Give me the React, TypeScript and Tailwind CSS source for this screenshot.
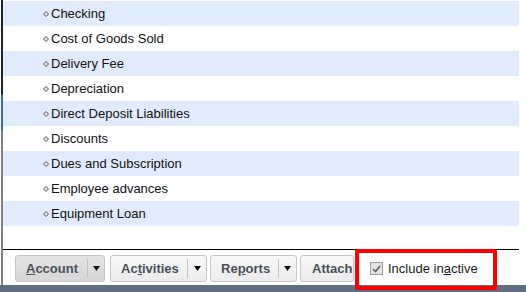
import type { ReactNode } from "react";

const accounts = [
  "Checking",
  "Cost of Goods Sold",
  "Delivery Fee",
  "Depreciation",
  "Direct Deposit Liabilities",
  "Discounts",
  "Dues and Subscription",
  "Employee advances",
  "Equipment Loan",
];

function Diamond() {
  return (
    <svg width="6" height="6" viewBox="0 0 6 6" className="shrink-0" aria-hidden="true">
      <polygon points="3,0.5 5.5,3 3,5.5 0.5,3" fill="#e8e8e8" stroke="#555" strokeWidth="1" />
    </svg>
  );
}

function Arrow() {
  return (
    <svg width="7" height="5" viewBox="0 0 7 5" aria-hidden="true">
      <polygon points="0,0 7,0 3.5,5" fill="#111" />
    </svg>
  );
}

function SplitButton({
  label,
  mainW,
  arrowW,
  pressed,
}: {
  label: ReactNode;
  mainW: string;
  arrowW: string;
  pressed?: boolean;
}) {
  return (
    <div
      className={`flex h-[27px] rounded-[3px] border border-[#c6c6c6] ${
        pressed
          ? "bg-[linear-gradient(to_bottom,#e4e4e4,#d6d6d6)]"
          : "bg-[linear-gradient(to_bottom,#f8f8f8,#ebebeb)]"
      }`}
    >
      <div className={`flex items-center pl-[10px] ${mainW} text-[13px] font-bold text-[#4a5059]`}>
        {label}
      </div>
      <div className="my-[3px] w-px bg-[#c2c2c2]" />
      <div className={`flex items-center justify-center ${arrowW}`}>
        <Arrow />
      </div>
    </div>
  );
}

export default function App() {
  return (
    <div className="relative h-[292px] w-[526px] overflow-hidden bg-white font-['Liberation_Sans',Arial,sans-serif]">
      <div className="flex h-full flex-col">
        <div className="flex flex-1">
          <div className="ml-[1px] w-[2px] bg-[linear-gradient(to_bottom,#1d2230_0%,#1d2230_33%,#3c6aae_33.4%,#3c6aae_45.5%,#808080_45.7%,#808080_100%)]" />
          <div className="flex w-[516px] flex-col">
            <ul className="pt-[1px]">
              {accounts.map((name, i) => (
                <li
                  key={name}
                  className={`flex h-[25px] items-center gap-[2px] pl-[40px] text-[13px] text-[#111] ${
                    i % 2 === 0 ? "bg-[#e0ecfd]" : "bg-white"
                  }`}
                >
                  <Diamond />
                  <span>{name}</span>
                </li>
              ))}
            </ul>
            <div className="flex-1" />
            <div className="h-px bg-black" />
            <div className="flex h-[35px] items-start pl-[12px] pt-[5px]">
              <SplitButton
                pressed
                mainW="w-[71px]"
                arrowW="w-[16px]"
                label={
                  <span>
                    <span className="underline">A</span>ccount
                  </span>
                }
              />
              <div className="ml-[5px]">
                <SplitButton
                  mainW="w-[76px]"
                  arrowW="w-[18px]"
                  label={
                    <span>
                      Ac<span className="underline">t</span>ivities
                    </span>
                  }
                />
              </div>
              <div className="ml-[3px]">
                <SplitButton
                  mainW="w-[67px]"
                  arrowW="w-[17px]"
                  label={
                    <span>
                      Re<span className="underline">p</span>orts
                    </span>
                  }
                />
              </div>
              <div className="ml-[3px] flex h-[27px] w-[54px] items-center overflow-hidden rounded-[3px] border border-[#c6c6c6] bg-[linear-gradient(to_bottom,#f8f8f8,#ebebeb)] pl-[11px] text-[13px] font-bold whitespace-nowrap text-[#4a5059]">
                Attach
              </div>
              <label className="ml-[16px] flex h-[27px] items-center gap-[5px] text-[13px] text-[#1a1a1a]">
                <span className="flex h-[13px] w-[13px] items-center justify-center border border-[#9c9c9c] bg-[#e4e4e4]">
                  <svg width="9" height="8" viewBox="0 0 9 8" aria-hidden="true">
                    <polyline points="1,4 3.5,6.5 8,1" fill="none" stroke="#5f5f5f" strokeWidth="1.6" />
                  </svg>
                </span>
                <span>
                  Include in<span className="underline">a</span>ctive
                </span>
              </label>
            </div>
          </div>
        </div>
        <div className="h-[7px] bg-[#5f6e80]" />
      </div>
      <div className="absolute left-[355px] top-[249px] h-[41px] w-[142px] rounded-[2px] border-[4px] border-[#ff0000]" />
    </div>
  );
}
